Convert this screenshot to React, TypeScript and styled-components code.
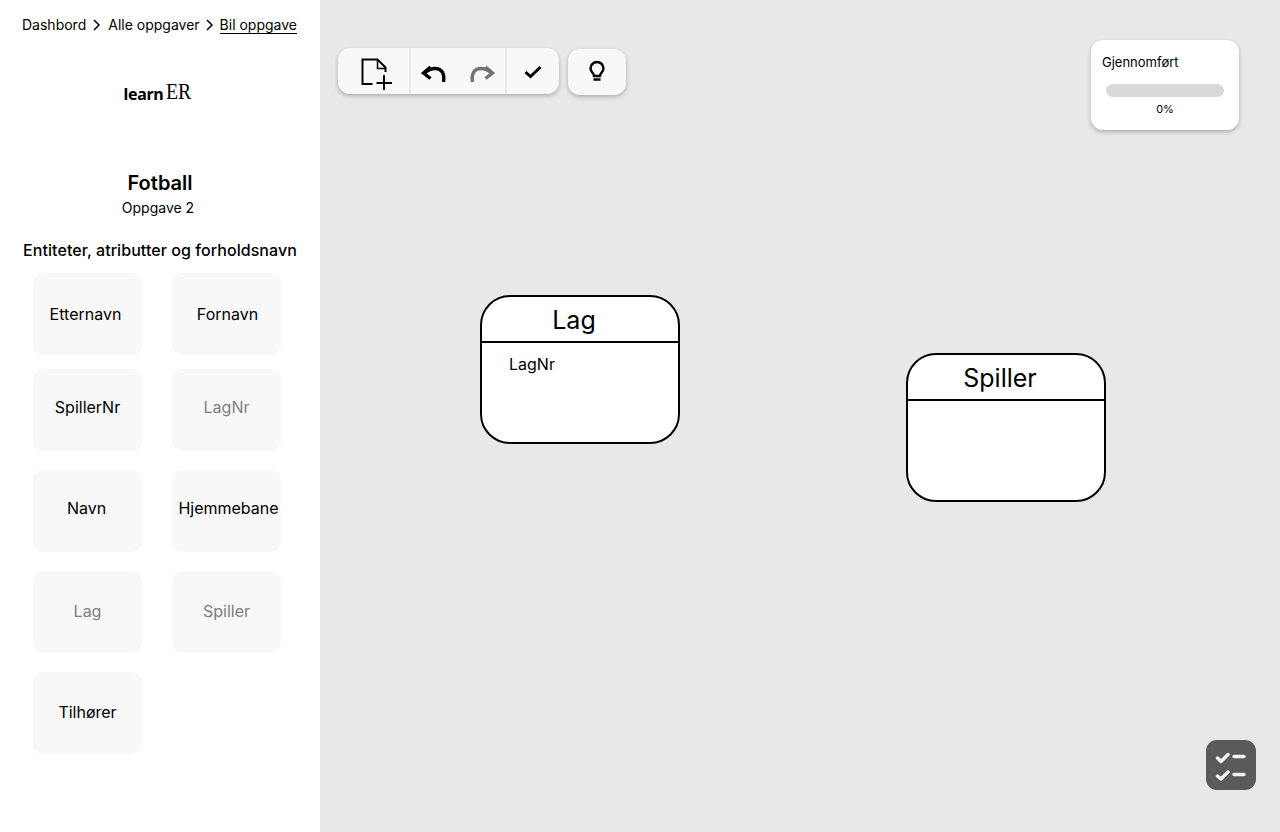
import styled, { createGlobalStyle } from "styled-components";

const GlobalStyle = createGlobalStyle`
  html, body {
    margin: 0;
    padding: 0;
    height: 100%;
    overflow: hidden;
    font-family: Inter, "Liberation Sans", sans-serif;
    color: #000;
  }
`;

const Page = styled.div`
  display: flex;
  width: 1280px;
  height: 832px;
`;

const Sidebar = styled.aside`
  display: flex;
  flex-direction: column;
  align-items: center;
  width: 320px;
  flex-shrink: 0;
  background: #fff;
`;

const Breadcrumbs = styled.nav`
  display: flex;
  align-items: center;
  align-self: flex-start;
  height: 18px;
  margin: 16px 0 0 22px;
  font-size: 14px;
`;

const Crumb = styled.span<{ $current?: boolean }>`
  line-height: 18px;
  border-bottom: ${({ $current }) => ($current ? "1px solid #000" : "none")};
  height: ${({ $current }) => ($current ? "17px" : "18px")};
`;

const CrumbArrow = styled.svg<{ $before: number; $after: number }>`
  width: 8px;
  height: 12px;
  margin: 0 ${({ $after }) => $after}px 0 ${({ $before }) => $before}px;
  fill: none;
  stroke: #000;
  stroke-width: 1.5;
`;

const Logo = styled.div`
  display: flex;
  align-items: baseline;
  width: 68px;
  height: 28px;
  margin: 45px 0 0 -5px;
`;

const LogoLearn = styled.span`
  font-family: "Noto Sans", sans-serif;
  font-weight: 700;
  font-size: 16px;
  line-height: 28px;
  letter-spacing: -0.3px;
`;

const LogoEr = styled.span`
  font-family: "Liberation Serif", serif;
  font-size: 23px;
  line-height: 28px;
  margin-left: 3px;
  transform: translateY(-1px) scaleX(0.86);
  transform-origin: left;
`;

const TaskTitle = styled.h1`
  margin: 64px 0 0;
  font-size: 20px;
  line-height: 24px;
  font-weight: 600;
`;

const TaskSubtitle = styled.p`
  margin: 4px 4px 0 0;
  font-size: 14px;
  line-height: 18px;
`;

const SectionTitle = styled.h2`
  margin: 23px 0 0;
  font-size: 16px;
  line-height: 20px;
  font-weight: 500;
  letter-spacing: 0.06px;
  white-space: nowrap;
`;

const Tiles = styled.div`
  display: grid;
  grid-template-columns: 109px 109px;
  column-gap: 30px;
  row-gap: 19px;
  align-self: flex-start;
  margin: 13px 0 0 33px;
`;

const Tile = styled.div<{ $used?: boolean; $dx: number; $up?: number; $top?: number }>`
  display: flex;
  align-items: center;
  justify-content: center;
  box-sizing: border-box;
  height: 82px;
  margin-top: ${({ $top }) => $top ?? 0}px;
  padding-left: ${({ $dx }) => Math.max($dx, 0) * 2}px;
  padding-right: ${({ $dx }) => Math.max(-$dx, 0) * 2}px;
  padding-bottom: ${({ $up }) => $up ?? 0}px;
  background: #f8f8f8;
  border-radius: 10px;
  font-size: 16px;
  white-space: nowrap;
  color: ${({ $used }) => ($used ? "#7f7f7f" : "#000")};
`;

const Canvas = styled.main`
  position: relative;
  flex: 1;
  background: #e8e8e8;
`;

const Panel = styled.div`
  position: absolute;
  display: flex;
  align-items: center;
  background: #f8f8f8;
  border-radius: 12px;
  box-shadow: 0 2px 4px rgba(0, 0, 0, 0.25);
`;

const Toolbar = styled(Panel)`
  left: 18px;
  top: 48px;
  height: 46px;
`;

const HintPanel = styled(Panel)`
  left: 248px;
  top: 49px;
  width: 58px;
  height: 46px;
  justify-content: center;
`;

const ToolGroup = styled.div<{ $width: number; $divider?: boolean; $padTop?: number; $padLeft?: number }>`
  display: flex;
  align-items: center;
  justify-content: center;
  box-sizing: border-box;
  width: ${({ $width }) => $width}px;
  height: 100%;
  padding-top: ${({ $padTop }) => $padTop ?? 0}px;
  padding-left: ${({ $padLeft }) => $padLeft ?? 0}px;
  border-right: ${({ $divider }) => ($divider ? "2px solid #e8e8e8" : "none")};
`;

const ToolIcon = styled.svg<{ $muted?: boolean; $gap?: number }>`
  display: block;
  margin-left: ${({ $gap }) => $gap ?? 0}px;
  fill: none;
  stroke: ${({ $muted }) => ($muted ? "#737373" : "#000")};
`;

const ProgressCard = styled.section`
  position: absolute;
  left: 771px;
  top: 40px;
  box-sizing: border-box;
  width: 148px;
  height: 90px;
  padding: 14px 15px 0 11px;
  background: #fff;
  border-radius: 12px;
  box-shadow: 0 2px 4px rgba(0, 0, 0, 0.25);
`;

const ProgressLabel = styled.div`
  font-size: 13px;
  line-height: 16px;
`;

const ProgressTrack = styled.div`
  height: 13px;
  margin: 14px 0 0 4px;
  background: #d9d9d9;
  border-radius: 7px;
`;

const ProgressValue = styled.div`
  margin: 5px 0 0 4px;
  font-size: 11px;
  line-height: 14px;
  text-align: center;
`;

const Entity = styled.div<{ $x: number; $y: number }>`
  position: absolute;
  left: ${({ $x }) => $x}px;
  top: ${({ $y }) => $y}px;
  display: flex;
  flex-direction: column;
  box-sizing: border-box;
  width: 200px;
  height: 148.5px;
  background: #fff;
  border: 2px solid #000;
  border-radius: 30px;
`;

const EntityName = styled.div`
  box-sizing: border-box;
  height: 46px;
  padding-right: 12px;
  border-bottom: 2px solid #000;
  font-size: 25px;
  line-height: 47px;
  text-align: center;
`;

const EntityAttribute = styled.div`
  padding: 11px 0 0 27px;
  font-size: 16px;
  line-height: 20px;
`;

const ChecklistButton = styled.button`
  position: absolute;
  left: 886px;
  top: 740px;
  display: flex;
  align-items: center;
  justify-content: center;
  width: 50px;
  height: 50px;
  padding: 0;
  background: #5a5a5a;
  border: none;
  border-radius: 11px;
`;

const tiles = [
  { name: "Etternavn", dx: -2 },
  { name: "Fornavn", dx: 1 },
  { name: "SpillerNr", up: 6, top: -5, dx: 0 },
  { name: "LagNr", used: true, up: 6, top: -5, dx: 0 },
  { name: "Navn", up: 6, dx: -1 },
  { name: "Hjemmebane", up: 6, dx: 2 },
  { name: "Lag", used: true, up: 2, dx: 0 },
  { name: "Spiller", used: true, up: 2, dx: 0 },
  { name: "Tilhører", up: 2, dx: 0 },
];

export default function App() {
  return (
    <Page>
      <GlobalStyle />
      <Sidebar>
        <Breadcrumbs>
          <Crumb>Dashbord</Crumb>
          <CrumbArrow $before={7} $after={7} viewBox="0 0 8 12">
            <path d="M1 1l5 5-5 5" />
          </CrumbArrow>
          <Crumb>Alle oppgaver</Crumb>
          <CrumbArrow $before={6} $after={6} viewBox="0 0 8 12">
            <path d="M1 1l5 5-5 5" />
          </CrumbArrow>
          <Crumb $current>Bil oppgave</Crumb>
        </Breadcrumbs>
        <Logo>
          <LogoLearn>learn</LogoLearn>
          <LogoEr>ER</LogoEr>
        </Logo>
        <TaskTitle>Fotball</TaskTitle>
        <TaskSubtitle>Oppgave 2</TaskSubtitle>
        <SectionTitle>Entiteter, atributter og forholdsnavn</SectionTitle>
        <Tiles>
          {tiles.map((t) => (
            <Tile key={t.name} $used={t.used} $dx={t.dx} $up={t.up} $top={t.top}>
              {t.name}
            </Tile>
          ))}
        </Tiles>
      </Sidebar>
      <Canvas>
        <Toolbar>
          <ToolGroup $width={73} $divider $padTop={8} $padLeft={7}>
            <ToolIcon width="32" height="34" viewBox="0 0 32 34" strokeWidth="2">
              <path d="M11.500 26H1.500V1.500H16.500L24.500 9.500V14" />
              <path d="M16.500 1.500V10.500H24.500" strokeWidth="1.500" />
              <path d="M15.500 25H31M23 17V32" />
            </ToolIcon>
          </ToolGroup>
          <ToolGroup $width={96} $divider $padTop={6}>
            <ToolIcon width="26" height="20" viewBox="0 0 26 20" strokeWidth="3.400">
              <path d="M3.500 9C7 6 10 4.500 14 4.500C20 4.500 24 8.500 22.500 18" />
              <path d="M9.500 3L2.500 9L9.500 14.500" />
            </ToolIcon>
            <ToolIcon $muted $gap={22} width="26" height="20" viewBox="0 0 26 20" strokeWidth="3.400">
              <path d="M22.500 9C19 6 16 4.500 12 4.500C6 4.500 2 8.500 3.500 18" />
              <path d="M16.500 3L23.500 9L16.500 14.500" />
            </ToolIcon>
          </ToolGroup>
          <ToolGroup $width={52} $padTop={2}>
            <ToolIcon width="20" height="16" viewBox="0 0 20 16" strokeWidth="3">
              <path d="M2.500 8L7.500 12.500L17.500 3" />
            </ToolIcon>
          </ToolGroup>
        </Toolbar>
        <HintPanel>
          <ToolIcon width="20" height="24" viewBox="0 0 20 24" strokeWidth="2.400">
            <path d="M7 16c0-3-3.500-4-3.500-7.500a6.500 6.500 0 0113 0c0 3.500-3.500 4.500-3.500 7.500z" />
            <path d="M6.500 19.500h7" strokeWidth="2.500" />
          </ToolIcon>
        </HintPanel>
        <ProgressCard>
          <ProgressLabel>Gjennomført</ProgressLabel>
          <ProgressTrack />
          <ProgressValue>0%</ProgressValue>
        </ProgressCard>
        <Entity $x={160} $y={295}>
          <EntityName>Lag</EntityName>
          <EntityAttribute>LagNr</EntityAttribute>
        </Entity>
        <Entity $x={586} $y={353}>
          <EntityName>Spiller</EntityName>
        </Entity>
        <ChecklistButton aria-label="Sjekkliste">
          <svg width="32" height="32" viewBox="0 0 32 32" fill="none" stroke="#f4f4f4" strokeWidth="3.400">
            <path d="M2.500 9L6 12.500L13 5.500M2.500 27L6 30L13 23" strokeLinecap="round" strokeLinejoin="round" />
            <path d="M19 7.500H29M19 25.500H29" strokeLinecap="round" />
          </svg>
        </ChecklistButton>
      </Canvas>
    </Page>
  );
}
